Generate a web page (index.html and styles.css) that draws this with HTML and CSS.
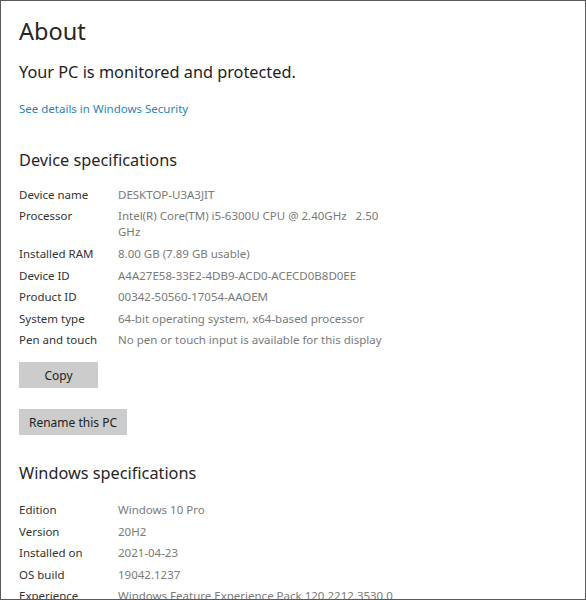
FILE: index.html
```html
<!DOCTYPE html>
<html lang="en">
<head>
<meta charset="utf-8">
<title>About</title>
<link rel="stylesheet" href="styles.css">
</head>
<body>
<main class="page">
  <h1 class="title">About</h1>
  <p class="status">Your PC is monitored and protected.</p>
  <a class="link" href="#">See details in Windows Security</a>

  <h2 class="section">Device specifications</h2>
  <dl class="specs">
    <dt>Device name</dt><dd>DESKTOP-U3A3JIT</dd>
    <dt>Processor</dt><dd>Intel(R) Core(TM) i5-6300U CPU @ 2.40GHz&nbsp;&nbsp; 2.50<br>GHz</dd>
    <dt>Installed RAM</dt><dd>8.00 GB (7.89 GB usable)</dd>
    <dt>Device ID</dt><dd>A4A27E58-33E2-4DB9-ACD0-ACECD0B8D0EE</dd>
    <dt>Product ID</dt><dd>00342-50560-17054-AAOEM</dd>
    <dt>System type</dt><dd>64-bit operating system, x64-based processor</dd>
    <dt>Pen and touch</dt><dd>No pen or touch input is available for this display</dd>
  </dl>
  <div class="buttons">
    <button class="btn btn-copy" type="button">Copy</button>
    <button class="btn btn-rename" type="button">Rename this PC</button>
  </div>

  <h2 class="section section-win">Windows specifications</h2>
  <dl class="specs specs-win">
    <dt>Edition</dt><dd>Windows 10 Pro</dd>
    <dt>Version</dt><dd>20H2</dd>
    <dt>Installed on</dt><dd>2021-04-23</dd>
    <dt>OS build</dt><dd>19042.1237</dd>
    <dt>Experience</dt><dd>Windows Feature Experience Pack 120.2212.3530.0</dd>
  </dl>
</main>
</body>
</html>
```

FILE: styles.css
```css
html, body {
  margin: 0;
  padding: 0;
  background: #ffffff;
}

body {
  font-family: "Noto Sans", "Open Sans", sans-serif;
  color: #222;
  overflow: hidden;
}

.page {
  box-sizing: border-box;
  width: 586px;
  height: 600px;
  border: 1px solid #5a5a5a;
  padding: 12px 0 0 18px;
  overflow: hidden;
}

.title {
  margin: 0;
  font-size: 23.5px;
  font-weight: 400;
  line-height: 36px;
  color: #262626;
}

.status {
  margin: 12px 0 0;
  font-size: 16.3px;
  font-weight: 400;
  line-height: 22px;
  color: #1e1e1e;
}

.link {
  display: block;
  margin-top: 18px;
  font-size: 11.5px;
  line-height: 16px;
  color: #2a86b4;
  text-decoration: none;
}

.section {
  margin: 31px 0 0;
  font-size: 16.3px;
  font-weight: 400;
  line-height: 24px;
  color: #262626;
}

.section-win {
  margin-top: 26px;
}

.specs {
  display: grid;
  grid-template-columns: 99px 1fr;
  margin: 12px 0 0;
  font-size: 11.5px;
  line-height: 16px;
}

.specs-win {
  margin-top: 14px;
}

.specs dt,
.specs dd {
  padding: 2.8px 0;
}

.specs dt {
  color: #333;
}

.specs dd {
  margin: 0;
  color: #7a7a7a;
}

.buttons {
  display: flex;
  flex-direction: column;
  align-items: flex-start;
  gap: 21px;
  margin-top: 11px;
}

.btn {
  height: 26px;
  border: none;
  background: #cccccc;
  font-family: inherit;
  font-size: 12px;
  color: #222;
  padding: 0;
}

.btn-copy {
  width: 79px;
}

.btn-rename {
  width: 108px;
}
```
